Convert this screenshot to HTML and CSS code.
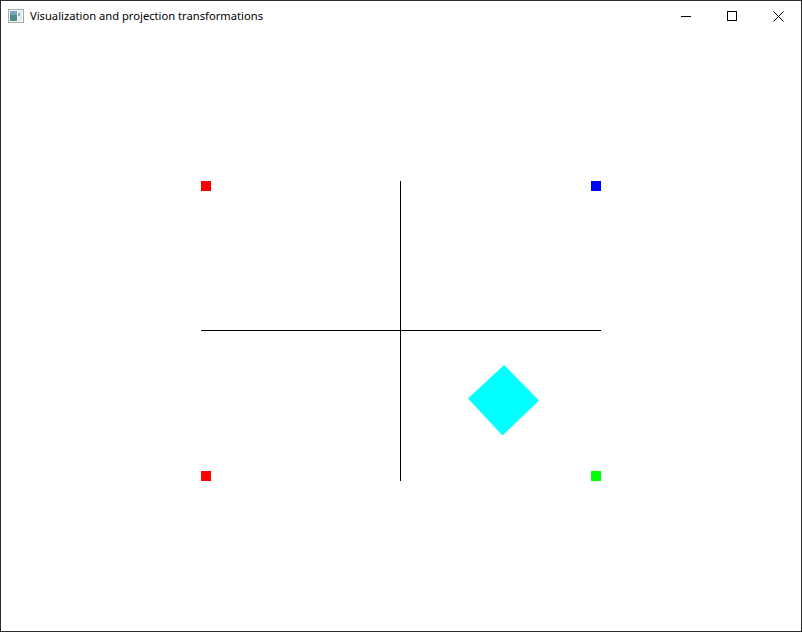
FILE: index.html
```html
<!DOCTYPE html>
<html>
<head>
<meta charset="utf-8">
<link rel="stylesheet" href="styles.css">
<title>Visualization and projection transformations</title>
</head>
<body>
<div class="window">
  <div class="titlebar">
    <svg class="app-icon" width="16" height="16" viewBox="0 0 16 16">
      <rect x="0.5" y="1.5" width="15" height="13" fill="#f7f7f7" stroke="#a8a8a8"/>
      <rect x="2" y="3" width="7" height="10" fill="#4f8a8f"/>
      <rect x="2" y="3" width="7" height="4" fill="#7aa3bd"/>
      <rect x="10" y="3" width="4" height="10" fill="#e2eaea"/>
      <rect x="10" y="5" width="2" height="3" fill="#8fb5b5"/>
    </svg>
    <span class="title">Visualization and projection transformations</span>
    <div class="controls">
      <span class="ctl"><svg width="10" height="10" viewBox="0 0 10 10"><path d="M0 5.5H10" stroke="#000" stroke-width="1"/></svg></span>
      <span class="ctl"><svg width="10" height="10" viewBox="0 0 10 10"><rect x="0.5" y="0.5" width="9" height="9" fill="none" stroke="#000"/></svg></span>
      <span class="ctl"><svg width="11" height="11" viewBox="0 0 11 11"><path d="M0.5 0.5L10.5 10.5M10.5 0.5L0.5 10.5" stroke="#000" stroke-width="1"/></svg></span>
    </div>
  </div>
  <svg class="canvas" width="800" height="600" viewBox="0 0 800 600">
    <rect x="200" y="150" width="10" height="10" fill="#ff0000"/>
    <rect x="590" y="150" width="10" height="10" fill="#0000ff"/>
    <rect x="200" y="440" width="10" height="10" fill="#ff0000"/>
    <rect x="590" y="440" width="10" height="10" fill="#00ff00"/>
    <path d="M399.5 150V450" stroke="#000" stroke-width="1"/>
    <path d="M200 299.5H600" stroke="#000" stroke-width="1"/>
    <polygon points="503,334 538,369.5 501.5,404.5 467,367.5" fill="#00ffff"/>
  </svg>
</div>
</body>
</html>
```
FILE: styles.css
```css
html, body {
  margin: 0;
  padding: 0;
  background: #fff;
}
.window {
  width: 800px;
  height: 630px;
  border: 1px solid #2b2b2b;
  background: #fff;
  display: flex;
  flex-direction: column;
}
.titlebar {
  height: 30px;
  display: flex;
  align-items: center;
  font-family: "Noto Sans", "Open Sans", sans-serif;
  font-size: 11.2px;
  color: #000;
}
.app-icon {
  margin-left: 7px;
  margin-right: 6px;
  display: block;
}
.title {
  flex: 1;
  line-height: 16px;
  margin-top: 0;
}
.controls {
  display: flex;
  height: 30px;
}
.ctl {
  width: 46px;
  height: 30px;
  display: flex;
  align-items: center;
  justify-content: center;
}
.canvas {
  display: block;
}
```
